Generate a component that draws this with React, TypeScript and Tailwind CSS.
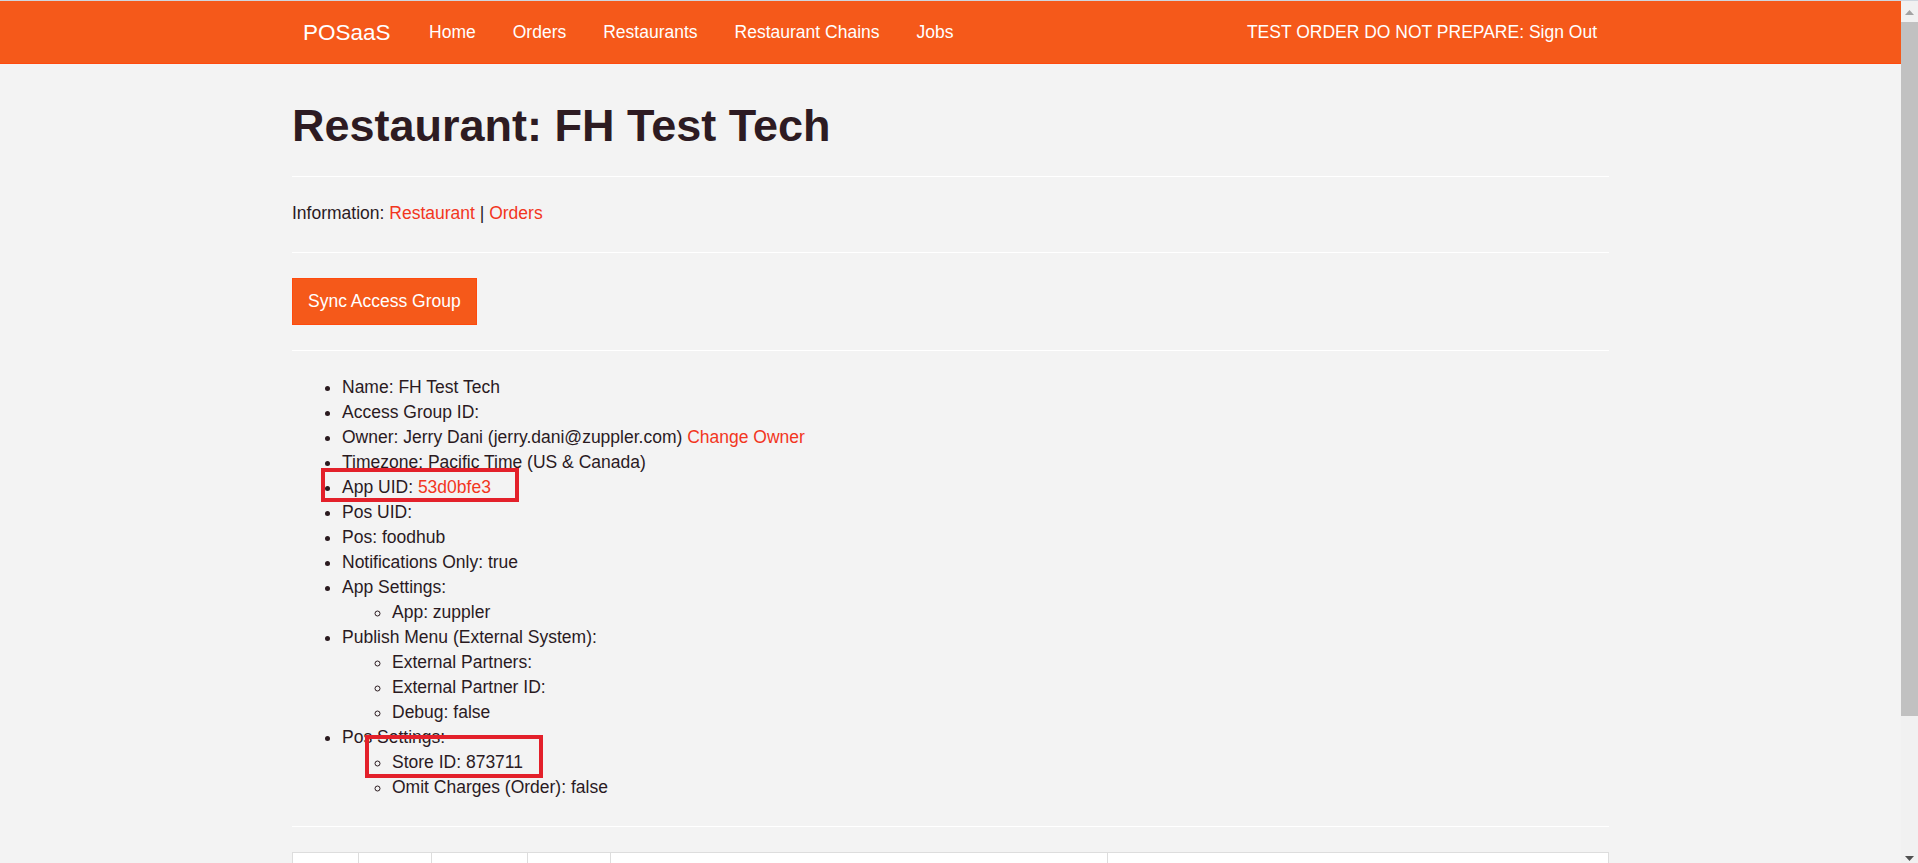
import React from 'react';

const navLinks = ['Home', 'Orders', 'Restaurants', 'Restaurant Chains', 'Jobs'];

const columns = [66, 73, 96, 83, 496, 501];

const Link: React.FC<{ children: React.ReactNode }> = ({ children }) => (
  <a href="#" className="text-[#f2361e]">
    {children}
  </a>
);

const Hr: React.FC<{ className?: string }> = ({ className }) => (
  <div className={`border-t border-white ${className ?? ''}`} />
);

const Scrollbar: React.FC = () => (
  <div className="w-[17px] shrink-0 bg-[#f1f1f1] flex flex-col">
    <div className="h-[21px] flex items-start justify-center pt-[9px]">
      <svg width="9" height="5" viewBox="0 0 9 5">
        <polygon points="4.5,0 9,5 0,5" fill="#a3a3a3" />
      </svg>
    </div>
    <div className="h-[694px] bg-[#c1c1c1]" />
    <div className="flex-1 flex items-end justify-center pb-[2px]">
      <svg width="9" height="5" viewBox="0 0 9 5">
        <polygon points="0,0 9,0 4.5,5" fill="#505050" />
      </svg>
    </div>
  </div>
);

const Navbar: React.FC = () => (
  <nav className="h-[63px] bg-[#f5591a] border-b border-[#ff4a0d] text-white">
    <div className="w-[1317px] mx-auto h-full flex items-center justify-between">
      <div className="flex items-center">
        <a href="#" className="pl-[11px] pr-[20px] text-[22.5px] leading-[25px]">
          POSaaS
        </a>
        {navLinks.map((l) => (
          <a key={l} href="#" className="px-[18.5px] text-[17.5px] leading-[25px]">
            {l}
          </a>
        ))}
      </div>
      <a href="#" className="pr-[12px] text-[17.5px] leading-[25px]">
        TEST ORDER DO NOT PREPARE: Sign Out
      </a>
    </div>
  </nav>
);

const RedBox: React.FC<{ className: string }> = ({ className }) => (
  <span className={`absolute border-[4px] border-[#e3202a] pointer-events-none ${className}`} />
);

export default function App() {
  return (
    <div className="h-[863px] overflow-hidden bg-[#f3f3f3] font-['Liberation_Sans',Arial,sans-serif] text-[#2a1a1f]">
      <div className="h-px bg-[#cfd6de]" />
      <div className="flex h-[862px]">
        <div className="flex-1 overflow-hidden">
          <Navbar />
          <main className="w-[1317px] mx-auto">
            <h1 className="mt-[38px] text-[45px] leading-[48px] font-bold text-[#2d1b22]">
              Restaurant: FH Test Tech
            </h1>
            <Hr className="mt-[26px]" />
            <p className="mt-[24px] text-[17.5px] leading-[25px]">
              Information: <Link>Restaurant</Link> | <Link>Orders</Link>
            </p>
            <Hr className="mt-[26px]" />
            <button className="mt-[25px] block bg-[#f5591a] border border-[#ff4a0d] text-white text-[17.5px] leading-[25px] py-[10px] px-[15px]">
              Sync Access Group
            </button>
            <Hr className="mt-[25px]" />
            <ul className="mt-[24px] list-disc pl-[50px] text-[17.5px] leading-[25px]">
              <li>Name: FH Test Tech</li>
              <li>Access Group ID:</li>
              <li>
                Owner: Jerry Dani (jerry.dani@zuppler.com) <Link>Change Owner</Link>
              </li>
              <li>Timezone: Pacific Time (US &amp; Canada)</li>
              <li className="relative">
                App UID: <Link>53d0bfe3</Link>
                <RedBox className="-left-[21px] -top-[7px] w-[198px] h-[34px]" />
              </li>
              <li>Pos UID:</li>
              <li>Pos: foodhub</li>
              <li>Notifications Only: true</li>
              <li>
                App Settings:
                <ul className="list-[circle] pl-[50px]">
                  <li>App: zuppler</li>
                </ul>
              </li>
              <li>
                Publish Menu (External System):
                <ul className="list-[circle] pl-[50px]">
                  <li>External Partners:</li>
                  <li>External Partner ID:</li>
                  <li>Debug: false</li>
                </ul>
              </li>
              <li>
                Pos Settings:
                <ul className="list-[circle] pl-[50px]">
                  <li className="relative">
                    Store ID: 873711
                    <RedBox className="-left-[27px] -top-[15px] w-[178px] h-[43px]" />
                  </li>
                  <li>Omit Charges (Order): false</li>
                </ul>
              </li>
            </ul>
            <Hr className="mt-[26px]" />
            <table className="mt-[25px] w-full bg-white border border-[#dddddd] border-collapse">
              <thead>
                <tr>
                  {columns.map((w, i) => (
                    <th key={i} style={{ width: w }} className="border border-[#dddddd] h-[50px]">
                      &nbsp;
                    </th>
                  ))}
                </tr>
              </thead>
            </table>
          </main>
        </div>
        <Scrollbar />
      </div>
    </div>
  );
}
